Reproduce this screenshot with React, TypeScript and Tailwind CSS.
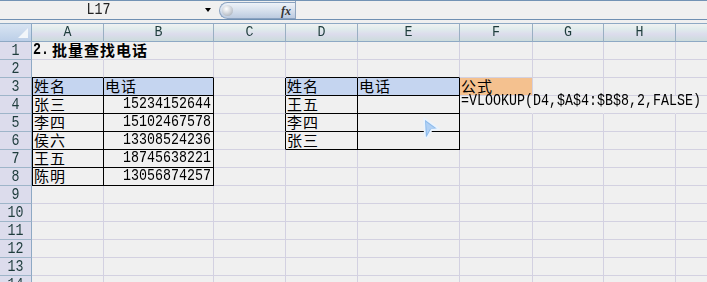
import type { ReactNode } from 'react'

const mono = "font-['Liberation_Mono',monospace] text-[13.33px]"
const cjk = "font-['Noto_Sans_CJK_SC','Noto_Sans_CJK_JP',sans-serif] text-[15px] tracking-[1px]"

const COLS = [
  { key: 'A', w: 'w-[72px]' },
  { key: 'B', w: 'w-[110px]' },
  { key: 'C', w: 'w-[72px]' },
  { key: 'D', w: 'w-[72px]' },
  { key: 'E', w: 'w-[102px]' },
  { key: 'F', w: 'w-[73px]' },
  { key: 'G', w: 'w-[71px]' },
  { key: 'H', w: 'w-[72px]' },
  { key: 'I', w: 'w-[72px]' },
]

const ROWS = [1, 2, 3, 4, 5, 6, 7, 8, 9, 10, 11, 12, 13, 14]

const people = [
  ['张三', '15234152644'],
  ['李四', '15102467578'],
  ['侯六', '13308524236'],
  ['王五', '18745638221'],
  ['陈明', '13056874257'],
]
const lookup = ['王五', '李四', '张三']

// cells inside the two bordered tables
function inTable(r: number, c: number) {
  return (r >= 3 && r <= 8 && c >= 0 && c <= 1) || (r >= 3 && r <= 6 && c >= 3 && c <= 4)
}

// text that runs over into the next cells hides their grid lines
function spills(r: number, c: number) {
  return (r === 1 && c === 0) || (r === 4 && c >= 5 && c <= 7)
}

const Cjk = ({ children, bold }: { children: ReactNode; bold?: boolean }) => (
  <span className={`${cjk} leading-[16px] ${bold ? 'font-bold' : ''}`}>{children}</span>
)

const Num = ({ children, bold }: { children: ReactNode; bold?: boolean }) => (
  <span className={`${mono} leading-none inline-block scale-y-[1.2] origin-bottom ${bold ? 'font-bold' : ''}`}>
    {children}
  </span>
)

function cellContent(r: number, c: number): ReactNode {
  if (r === 1 && c === 0)
    return (
      <span className="whitespace-nowrap flex items-end gap-[3px]">
        <Num bold>2.</Num>
        <Cjk bold>批量查找电话</Cjk>
      </span>
    )
  if (r === 3 && (c === 0 || c === 3)) return <Cjk>姓名</Cjk>
  if (r === 3 && (c === 1 || c === 4)) return <Cjk>电话</Cjk>
  if (r === 3 && c === 5) return <Cjk>公式</Cjk>
  if (r >= 4 && r <= 8 && c === 0) return <Cjk>{people[r - 4][0]}</Cjk>
  if (r >= 4 && r <= 8 && c === 1) return <Num>{people[r - 4][1]}</Num>
  if (r >= 4 && r <= 6 && c === 3) return <Cjk>{lookup[r - 4]}</Cjk>
  if (r === 4 && c === 5)
    return <span className="whitespace-nowrap"><Num>=VLOOKUP(D4,$A$4:$B$8,2,FALSE)</Num></span>
  return null
}

function Cell({ r, c }: { r: number; c: number }) {
  const col = COLS[c]
  const right = inTable(r, c) || inTable(r, c + 1)
    ? 'border-r-black'
    : spills(r, c)
      ? 'border-r-transparent'
      : 'border-r-[#d3d1e1]'
  const bottom = inTable(r, c) || inTable(r + 1, c) ? 'border-b-black' : 'border-b-[#d3d1e1]'
  const left = c === 0 && inTable(r, c) ? 'border-l border-l-black' : ''
  const header = r === 3 && inTable(r, c) ? 'bg-[#c5d5f0]' : ''
  const orange = r === 3 && c === 5 ? 'bg-[#f4c18f]' : ''
  const alignRight = r >= 4 && r <= 8 && c === 1
  const overflow = (r === 1 && c === 0) || (r === 4 && c === 5) ? 'relative z-10' : ''
  return (
    <div
      className={`${col.w} h-[18px] shrink-0 border-r border-b ${right} ${bottom} ${left} ${header} ${orange} flex items-end pb-[1px] ${
        alignRight ? 'justify-end pr-[2px]' : 'pl-[1px]'
      } ${overflow}`}
    >
      {cellContent(r, c)}
    </div>
  )
}

function FormulaBar() {
  return (
    <div className="h-[20px] border-t border-t-[#7393b5] border-b border-b-[#6f8fb2] flex bg-[#f0f0f0]">
      <div className={`w-[197px] flex items-center justify-center ${mono} text-[#222]`}>
        <span className="inline-block scale-y-[1.2]">L17</span>
      </div>
      <div className="w-[22px] flex items-center justify-start pl-[8px]">
        <div className="w-0 h-0 border-l-[3.5px] border-r-[3.5px] border-t-[4px] border-l-transparent border-r-transparent border-t-black" />
      </div>
      <div className="w-[76px] h-[17px] mt-[1px] rounded-l-full border border-r-0 border-[#8aa2c0] bg-[linear-gradient(to_bottom,#eef2f8_0%,#d9e2ee_45%,#bccbe0_100%)] flex items-center pl-[2px] pr-[4px]">
        <div className="w-[11px] h-[11px] rounded-full bg-[radial-gradient(circle_at_40%_35%,#ffffff_0%,#d4d8de_45%,#9aa2ac_100%)]" />
        <span className="ml-auto font-['Liberation_Serif',serif] italic font-bold text-[12px] text-[#333] leading-none">
          fx
        </span>
      </div>
      <div className="w-px bg-[#8fa4be]" />
      <div className="flex-1" />
    </div>
  )
}

function ColumnHeader() {
  return (
    <div className="flex h-[19px] border-t border-t-[#8ea9c4]">
      <div className="w-[32px] shrink-0 border-r border-r-[#8ea9c4] border-b border-b-[#8ea9c4] bg-[linear-gradient(to_bottom,#d8e4f2,#bccfe8)] relative">
        <div className="absolute right-[3px] bottom-[3px] w-0 h-0 border-l-[10px] border-l-transparent border-b-[10px] border-b-[#f2f6fa]" />
      </div>
      {COLS.map((col) => (
        <div
          key={col.key}
          className={`${col.w} shrink-0 border-r border-r-[#9aafc3] border-b border-b-[#8ea9c4] bg-[linear-gradient(to_bottom,#f0f2f2_0%,#e0ecec_30%,#dcdcec_60%,#ccdcdc_100%)] flex items-center justify-center ${mono} text-[#1e3c3c]`}
        >
          <span className="inline-block scale-y-[1.15]">{col.key}</span>
        </div>
      ))}
    </div>
  )
}

function Cursor() {
  return (
    <svg className="absolute left-[420px] top-[115px]" width="22" height="26" viewBox="0 0 22 26">
      <defs>
        <filter id="soft" x="-30%" y="-30%" width="160%" height="160%">
          <feGaussianBlur stdDeviation="0.6" />
        </filter>
      </defs>
      <path
        d="M4 3 L19 14 L11.5 15 L7 23 L5 22 Z"
        fill="#8dbbec"
        stroke="#eaf3fd"
        strokeWidth="1.8"
        strokeLinejoin="round"
        filter="url(#soft)"
      />
      <path d="M6 7 L15 13.5 L10 14 L7 19 Z" fill="#b4d3f5" opacity="0.9" filter="url(#soft)" />
    </svg>
  )
}

export default function App() {
  return (
    <div className="w-[707px] h-[282px] overflow-hidden bg-[#f0f0f0] relative">
      <FormulaBar />
      <div className="h-[3px] bg-[#f0f0f0]" />
      <ColumnHeader />
      {ROWS.map((r) => (
        <div key={r} className="flex">
          <div
            className={`w-[32px] h-[18px] shrink-0 border-r border-r-[#8ea9c4] border-b border-b-[#9eb5c9] bg-[#dcdcec] flex items-center justify-center ${mono} text-[#1e3c3c]`}
          >
            <span className="inline-block scale-y-[1.2]">{r}</span>
          </div>
          {COLS.map((_, c) => (
            <Cell key={c} r={r} c={c} />
          ))}
        </div>
      ))}
      <Cursor />
    </div>
  )
}
